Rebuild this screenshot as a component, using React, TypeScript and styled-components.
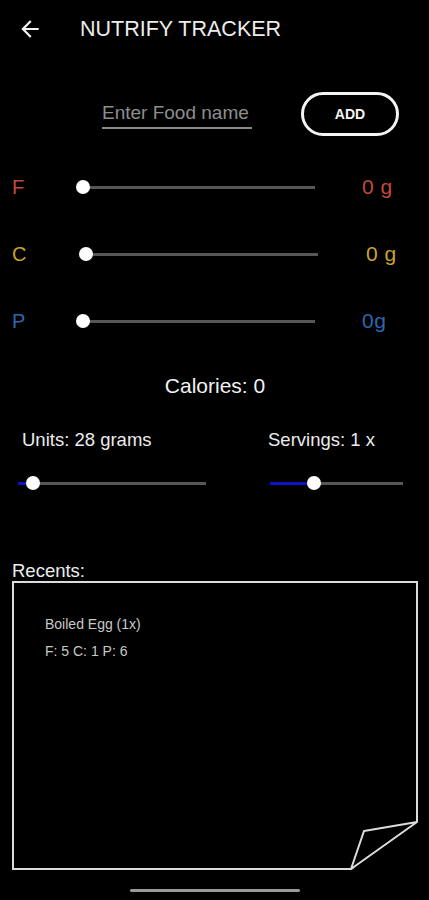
import React from "react";
import styled, { createGlobalStyle } from "styled-components";
import { MdArrowBack } from "react-icons/md";

const GlobalStyle = createGlobalStyle`
  html, body {
    margin: 0;
    padding: 0;
    background: #000;
  }

  body {
    font-family: "Liberation Sans", Arial, sans-serif;
    color: #ececec;
  }
`;

type Macro = { key: string; color: string; shift: number; valueShift: number; value: string };

const MACROS: Macro[] = [
  { key: "F", color: "#c24a3b", shift: 0, valueShift: 0, value: "0 g" },
  { key: "C", color: "#c9a32c", shift: 3, valueShift: 1, value: "0 g" },
  { key: "P", color: "#2f66ad", shift: 0, valueShift: 0, value: "0g" },
];

const Slider = ({ width, percent }: { width: number; percent: number }) => (
  <SliderBox style={{ width }}>
    <Track />
    <Fill style={{ width: `${percent}%` }} />
    <Thumb style={{ left: `${percent}%` }} />
  </SliderBox>
);

const App = () => {
  return (
    <>
      <GlobalStyle />
      <Page>
        <Header>
          <BackButton>
            <MdArrowBack size={26} />
          </BackButton>
          <Title>NUTRIFY TRACKER</Title>
        </Header>

        <InputRow>
          <FoodInput placeholder="Enter Food name" />
          <AddButton>ADD</AddButton>
        </InputRow>

        <Macros>
          {MACROS.map((m) => (
            <MacroRow key={m.key}>
              <MacroLabel color={m.color}>{m.key}</MacroLabel>
              <SliderSlot $shift={m.shift}>
                <Slider width={232} percent={0} />
              </SliderSlot>
              <MacroValue color={m.color} $shift={m.valueShift}>
                {m.value}
              </MacroValue>
            </MacroRow>
          ))}
        </Macros>

        <Calories>Calories: 0</Calories>

        <Controls>
          <Control $left={22}>
            <ControlLabel>Units: 28 grams</ControlLabel>
            <ControlSlider $offset={-4}>
              <Slider width={188} percent={8} />
            </ControlSlider>
          </Control>
          <Control $left={18}>
            <ControlLabel>Servings: 1 x</ControlLabel>
            <ControlSlider $offset={2}>
              <Slider width={133} percent={33} />
            </ControlSlider>
          </Control>
        </Controls>

        <RecentsLabel>Recents:</RecentsLabel>
        <RecentsBox>
          <RecentTitle>Boiled Egg (1x)</RecentTitle>
          <RecentMacros>F: 5 C: 1 P: 6</RecentMacros>
          <Curl width="70" height="52" viewBox="0 0 70 52">
            <polygon points="2,53 72,53 72,2" fill="#000" />
            <polyline
              points="3,51 69,4 16,13 3,51"
              fill="none"
              stroke="#dcdcdc"
              strokeWidth="2"
              strokeLinejoin="round"
            />
          </Curl>
        </RecentsBox>

        <HomeBar />
      </Page>
    </>
  );
};

export default App;

const Page = styled.div`
  width: 429px;
  height: 900px;
  background: #000;
  display: flex;
  flex-direction: column;
  overflow: hidden;
`;

const Header = styled.header`
  height: 58px;
  display: flex;
  align-items: center;
  padding-left: 17px;
  gap: 37px;
`;

const BackButton = styled.div`
  display: flex;
  color: #f2f2f2;
`;

const Title = styled.h1`
  margin: 0;
  font-size: 21.5px;
  font-weight: 400;
  color: #ececec;
`;

const InputRow = styled.div`
  margin-top: 34px;
  height: 44px;
  display: flex;
  align-items: center;
  padding-left: 102px;
  gap: 49px;
`;

const FoodInput = styled.input`
  box-sizing: border-box;
  width: 150px;
  height: 30px;
  padding: 0;
  background: transparent;
  border: none;
  border-bottom: 2px solid #8a8a8a;
  outline: none;
  font-family: "Liberation Sans", Arial, sans-serif;
  font-size: 19px;
  color: #eee;

  &::placeholder {
    color: #8e8e8e;
  }
`;

const AddButton = styled.button`
  box-sizing: border-box;
  width: 98px;
  height: 44px;
  border: 3px solid #f4f4f4;
  border-radius: 22px;
  background: transparent;
  color: #f4f4f4;
  font-family: "Liberation Sans", Arial, sans-serif;
  font-size: 14px;
  font-weight: 600;
`;

const Macros = styled.div`
  margin-top: 36px;
  display: flex;
  flex-direction: column;
  gap: 37px;
`;

const MacroRow = styled.div`
  height: 30px;
  display: flex;
  align-items: center;
  padding-left: 12px;
`;

const MacroLabel = styled.span<{ color: string }>`
  width: 71px;
  font-size: 20px;
  color: ${({ color }) => color};
`;

const SliderSlot = styled.div<{ $shift: number }>`
  margin-left: ${({ $shift }) => $shift}px;
  display: flex;
`;

const MacroValue = styled.span<{ color: string; $shift: number }>`
  margin-left: ${({ $shift }) => 47 + $shift}px;
  font-size: 21px;
  letter-spacing: 0.5px;
  color: ${({ color }) => color};
`;

const SliderBox = styled.div`
  position: relative;
  height: 16px;
`;

const Track = styled.div`
  position: absolute;
  left: 0;
  right: 0;
  top: 7px;
  height: 3px;
  background: #575757;
`;

const Fill = styled.div`
  position: absolute;
  left: 0;
  top: 7px;
  height: 3px;
  background: #1010c8;
`;

const Thumb = styled.div`
  position: absolute;
  top: 1px;
  width: 14px;
  height: 14px;
  border-radius: 50%;
  background: #fff;
  transform: translateX(-50%);
`;

const Calories = styled.div`
  margin-top: 37px;
  height: 26px;
  line-height: 26px;
  text-align: center;
  padding-left: 1px;
  font-size: 21px;
  color: #f2f2f2;
`;

const Controls = styled.div`
  margin-top: 30px;
  display: grid;
  grid-template-columns: 250px 1fr;
`;

const Control = styled.div<{ $left: number }>`
  display: flex;
  flex-direction: column;
  padding-left: ${({ $left }) => $left}px;
`;

const ControlLabel = styled.div`
  height: 22px;
  line-height: 22px;
  font-size: 18.5px;
  color: #ececec;
`;

const ControlSlider = styled.div<{ $offset: number }>`
  margin-top: 24px;
  margin-left: ${({ $offset }) => $offset}px;
  display: flex;
`;

const RecentsLabel = styled.div`
  margin-top: 69px;
  padding-left: 12px;
  height: 21px;
  line-height: 21px;
  font-size: 18.5px;
  color: #ececec;
`;

const RecentsBox = styled.div`
  position: relative;
  box-sizing: border-box;
  margin-left: 12px;
  width: 406px;
  height: 289px;
  border: 2px solid #dcdcdc;
  padding: 31px 0 0 31px;
`;

const RecentTitle = styled.div`
  height: 20px;
  line-height: 20px;
  font-size: 14px;
  color: #c8c8c8;
`;

const RecentMacros = styled.div`
  margin-top: 7px;
  height: 20px;
  line-height: 20px;
  font-size: 14px;
  color: #c8c8c8;
`;

const Curl = styled.svg`
  position: absolute;
  right: -2px;
  bottom: -2px;
  overflow: visible;
`;

const HomeBar = styled.div`
  margin: 19px 0 0 130px;
  width: 170px;
  height: 3px;
  border-radius: 2px;
  background: #9a9a9a;
`;
